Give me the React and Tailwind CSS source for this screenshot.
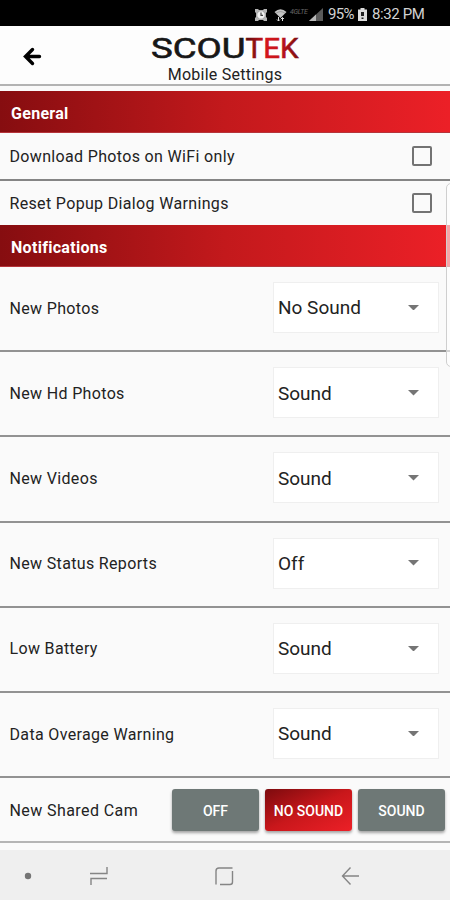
import { useState } from "react";

const checkOptions = ["Download Photos on WiFi only", "Reset Popup Dialog Warnings"];

const soundOptions = [
  { label: "New Photos", value: "No Sound" },
  { label: "New Hd Photos", value: "Sound" },
  { label: "New Videos", value: "Sound" },
  { label: "New Status Reports", value: "Off" },
  { label: "Low Battery", value: "Sound" },
  { label: "Data Overage Warning", value: "Sound" },
];

const sharedCamOptions = ["OFF", "NO SOUND", "SOUND"];

const StatusBar = () => {
  return (
    <div className="h-[26px] shrink-0 bg-black flex items-center justify-end pr-[25px] pt-[3px] text-[#d2d2d2] text-[15px] leading-none">
      <svg width="14" height="14" viewBox="0 0 14 14" className="mr-[6px]">
        <path d="M1 1h3l1 1h4l1-1h3v3l-1 1v4l1 1v3h-3l-1-1H5l-1 1H1v-3l1-1V5L1 4z" fill="#b4b4b4" />
        <circle cx="7" cy="7" r="4.2" fill="#f2f2f2" stroke="#999" strokeWidth="0.8" />
        <path d="M7 4.500V7.300H9" fill="none" stroke="#444" strokeWidth="1.200" />
      </svg>
      <svg width="13" height="14" viewBox="0 0 13 14" className="mr-[3px]">
        <path d="M0.500 4Q6.500 -1.500 12.500 4L6.500 10z" fill="#c4c4c4" />
        <path d="M2 5.200Q6.500 2 11 5.200" fill="none" stroke="#888" strokeWidth="0.700" />
        <path d="M4.500 9v4M3 11.500L4.500 13l1.500-1.500M8.500 13V9.500M7 11l1.500-1.500L10 11" fill="none" stroke="#ddd" strokeWidth="1" />
      </svg>
      <span className="w-[17px] mr-[2px] mb-[5px] text-[7px] italic text-[#666] tracking-[-0.3px]">4GLTE</span>
      <svg width="14" height="13" viewBox="0 0 14 13" className="mr-[5px]">
        <path d="M0 13L14 0V13z" fill="#5a5a5a" />
        <path d="M0 13L7 6.500V13z" fill="#b8b8b8" />
      </svg>
      <span className="w-[26px] mr-[4px] whitespace-nowrap tracking-[-0.7px]">95%</span>
      <svg width="9" height="13" viewBox="0 0 9 13" className="mr-[5px]">
        <path d="M2.500 0h4v1.500H9V13H0V1.500h2.500z" fill="#ddd" />
        <path d="M3 4h3v4H3zM3.500 9.500h2v1.500h-2z" fill="#222" />
      </svg>
      <span className="w-[53px] whitespace-nowrap tracking-[-0.4px]">8:32 PM</span>
    </div>
  );
};

const Header = () => {
  return (
    <div className="h-[60px] shrink-0 bg-[#fdfdfd] border-b-2 border-[#b3b3b3] grid grid-cols-[60px_1fr_60px]">
      <button className="flex items-start pl-[23px] pt-[21px]" aria-label="Back">
        <svg width="19" height="19" viewBox="0 0 19 19" fill="none" stroke="#000" strokeWidth="3.400" strokeLinecap="round">
          <path d="M2.500 9.500H16.500M9.500 2.500L2.500 9.500L9.500 16.500" />
        </svg>
      </button>
      <div className="flex flex-col items-center pt-[4px]">
        <svg width="150" height="34" viewBox="0 0 150 34">
          <text x="1" y="27.500" fontSize="28" textLength="94.500" lengthAdjust="spacingAndGlyphs" fill="#171717" stroke="#171717" strokeWidth="0.600">
            SCOU
          </text>
          <text x="95.500" y="27.500" fontSize="28" textLength="53" lengthAdjust="spacingAndGlyphs" fill="url(#tek)" stroke="url(#tek)" strokeWidth="0.600">
            TEK
          </text>
          <defs>
            <linearGradient id="tek" x1="0" x2="1">
              <stop offset="0" stopColor="#5c0a0e" />
              <stop offset="0.4" stopColor="#d4161c" />
              <stop offset="0.65" stopColor="#c4141a" />
              <stop offset="1" stopColor="#7a0c10" />
            </linearGradient>
          </defs>
        </svg>
        <p className="text-[16px] leading-[20px] tracking-[0.25px] mt-[1px] text-[#222] whitespace-nowrap">Mobile Settings</p>
      </div>
    </div>
  );
};

const SectionTitle = ({ title }) => {
  return (
    <div className="h-[42px] shrink-0 flex items-center px-[11px] pt-[4px] bg-linear-to-r from-[#860d10] via-[#c3191c] to-[#ec2027] border-b border-[#b5343a] text-white text-[16px] tracking-[0.3px] font-bold">
      {title}
    </div>
  );
};

const App = () => {
  const [checked, setChecked] = useState([]);
  const [sharedCam, setSharedCam] = useState("NO SOUND");

  const toggle = (label) => {
    setChecked(checked.includes(label) ? checked.filter((item) => item !== label) : [...checked, label]);
  };

  return (
    <div className="relative w-[450px] h-[900px] overflow-hidden flex flex-col bg-[#fafafa] font-[Roboto,sans-serif] text-[#222]">
      <StatusBar />
      <Header />
      <div className="flex flex-col pt-[5px] bg-[#fafafa]">
        <SectionTitle title="General" />
        {checkOptions.map((label, index) => (
          <div
            key={label}
            className={`flex items-center justify-between pl-[9.500px] pr-[18px] ${index === 0 ? "h-[48px] pb-px border-b-2 border-[#858585]" : "h-[44px] pb-px"}`}
          >
            <span className="text-[16px] tracking-[0.34px] pt-[3px]">{label}</span>
            <button
              onClick={() => toggle(label)}
              aria-label={label}
              className={`size-[20px] rounded-[2px] border-2 border-[#737373] ${checked.includes(label) ? "bg-[#737373]" : ""}`}
            ></button>
          </div>
        ))}
        <SectionTitle title="Notifications" />
        {soundOptions.map((option) => (
          <div key={option.label} className="h-[85.200px] flex items-center justify-between pl-[9.500px] pr-[11px] border-b-2 border-[#929292]">
            <span className="text-[16px] tracking-[0.34px]">{option.label}</span>
            <div className="w-[166px] h-[51px] mt-[-2px] flex items-center justify-between pl-[4px] pr-[19px] bg-white border border-[#efefef]">
              <span className="text-[19px] pt-[2px]">{option.value}</span>
              <svg width="11" height="5.500" viewBox="0 0 10 5">
                <path d="M0 0H10L5 5z" fill="#757575" />
              </svg>
            </div>
          </div>
        ))}
        <div className="h-[65px] flex items-center justify-between pl-[9.500px] pr-[5px] pt-[1px] border-b-2 border-[#b5b5b5]">
          <span className="text-[16px] tracking-[0.42px] pt-[2px]">New Shared Cam</span>
          <div className="flex gap-[6px]">
            {sharedCamOptions.map((name) => (
              <button
                key={name}
                onClick={() => setSharedCam(name)}
                className={`w-[87px] h-[42px] pt-[2px] rounded-[3px] text-white text-[14px] font-medium shadow-[0_2px_3px_rgba(0,0,0,0.35)] ${
                  sharedCam === name ? "bg-linear-to-br from-[#7d0b0e] via-[#c9171b] to-[#ec2027]" : "bg-[#6e7876]"
                }`}
              >
                {name}
              </button>
            ))}
          </div>
        </div>
      </div>

      {/* edge panel handle */}
      <div className="absolute top-[183px] -right-[8px] w-[12px] h-[184px] rounded-[5px] bg-white/60 border border-[#cfcfcf]"></div>

      <div className="mt-auto h-[50px] shrink-0 bg-[#efefef]">
        <svg width="450" height="50" viewBox="0 0 450 50" fill="none" stroke="#858585" strokeWidth="1.400">
          <circle cx="28" cy="26" r="3.200" fill="#757575" stroke="none" />
          <path d="M90 23.500H107V17M107 28.500H91V35" />
          <path d="M232.500 18H219Q216 18 216 21V34.500M220 34.500H230Q232.500 34.500 232.500 32V21" />
          <path d="M359 26H342.500M350.500 17.500L342.500 26L350.500 34.500" />
        </svg>
      </div>
    </div>
  );
};

export default App;
